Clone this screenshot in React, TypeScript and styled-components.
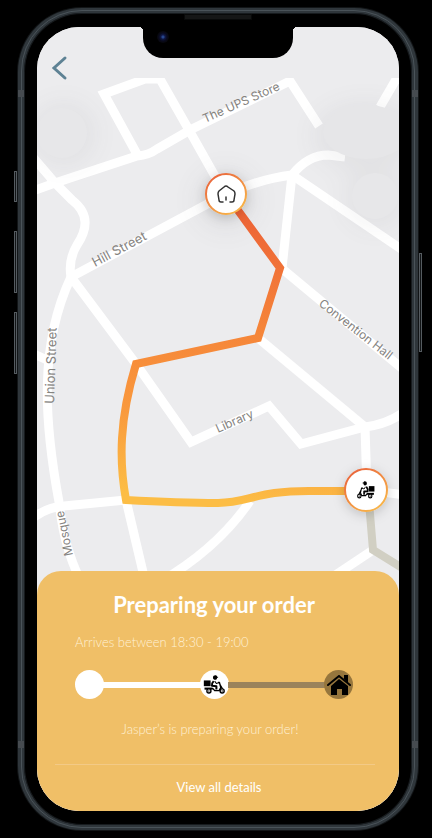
import React from "react";
import styled, { createGlobalStyle } from "styled-components";

const GlobalStyle = createGlobalStyle`
  * { box-sizing: border-box; }
  body { margin: 0; background: #000; }
`;

const Page = styled.main`
  display: flex;
  min-height: 100vh;
  padding: 8px 14px 8px 18px;
  background: #000;
  font-family: Lato, sans-serif;
`;

const Phone = styled.div`
  position: relative;
  display: flex;
  flex: 1;
  padding: 14px 13px;
  border: 5px solid #2f363b;
  border-width: 5px 6px;
  border-radius: 64px;
  background: #000;
  box-shadow: inset 0 0 0 1px #171b1e, 0 0 0 1px #121517;
  &::before {
    content: "";
    position: absolute;
    inset: -3px;
    border: 1px solid #4a5359;
    border-radius: 61px;
  }
`;

const SideKey = styled.span<{ $side: "left" | "right"; $top: number; $size: number }>`
  position: absolute;
  top: ${(p) => p.$top}px;
  ${(p) => p.$side}: -10px;
  width: 3px;
  height: ${(p) => p.$size}px;
  border: 1px solid #555b60;
  background: #111416;
`;

const Antenna = styled.span<{ $side: "left" | "right"; $edge: "top" | "bottom" }>`
  position: absolute;
  ${(p) => p.$side}: -6px;
  ${(p) => p.$edge}: 77px;
  width: 6px;
  height: 7px;
  background: #464b50;
`;

const Speaker = styled.span`
  position: absolute;
  top: 1px;
  left: 50%;
  width: 68px;
  height: 6px;
  margin-left: -34px;
  border: 1px solid #080909;
  background: #151616;
`;

const Screen = styled.div`
  position: relative;
  display: grid;
  flex: 1;
  grid-template-columns: minmax(0, 1fr);
  overflow: hidden;
  border-radius: 42px;
  background: #ececee;
`;

const Notch = styled.div`
  position: absolute;
  top: 0;
  left: 50%;
  width: 150px;
  height: 31px;
  margin-left: -75px;
  border-radius: 0 0 20px 20px;
  background: #000;
  &::before,
  &::after {
    content: "";
    position: absolute;
    top: 0;
    width: 4px;
    height: 4px;
  }
  &::before {
    left: -4px;
    background: radial-gradient(circle at 0 100%, transparent 4px, #000 4px);
  }
  &::after {
    right: -4px;
    background: radial-gradient(circle at 100% 100%, transparent 4px, #000 4px);
  }
`;

const Camera = styled.span`
  position: absolute;
  top: 4px;
  left: 14px;
  width: 12px;
  height: 12px;
  border-radius: 50%;
  background: radial-gradient(circle, #28478c 0 1px, #10194a 2px, #090a1c 4px, #07070c 6px);
`;

const BackButton = styled.button`
  position: absolute;
  top: 27px;
  left: 12px;
  width: 22px;
  height: 28px;
  padding: 0;
  border: 0;
  background: none;
  cursor: pointer;
  svg { display: block; }
`;

const MapView = styled.svg`
  grid-area: 1 / 1;
  width: 100%;
  height: 100%;
  min-height: 0;
  text { font-family: Inter, sans-serif; fill: #85837f; }
`;

const Sheet = styled.section`
  position: relative;
  grid-area: 1 / 1;
  align-self: end;
  height: 240px;
  border-radius: 24px 24px 0 0;
  background: rgba(239, 189, 98, 0.97);
  color: #fff;
`;

const SheetBody = styled.div`
  padding: 20px 46px 0 38px;
`;

const Title = styled.h1`
  margin: 0;
  font-size: 22px;
  line-height: 28px;
  font-weight: 700;
  text-align: center;
  white-space: nowrap;
`;

const Arrival = styled.p`
  margin: 14px 0 19px;
  font-size: 13px;
  line-height: 18px;
  font-weight: 300;
  color: #fff1d6;
`;

const Status = styled(Arrival)`
  margin: 21px 8px 26px 0;
  text-align: center;
`;

const Track = styled.ol`
  display: flex;
  align-items: center;
  margin: 0;
  padding: 0;
  list-style: none;
`;

const Step = styled.li<{ $done?: boolean }>`
  display: grid;
  flex: none;
  place-items: center;
  width: 29px;
  height: 29px;
  border-radius: 50%;
  background: ${(p) => (p.$done ? "#fff" : "#96763d")};
`;

const Leg = styled.li<{ $done?: boolean }>`
  flex: 1;
  height: 6px;
  margin: 0 -1px;
  background: ${(p) => (p.$done ? "#fff" : "#9b835b")};
`;

const Footer = styled.footer`
  display: flex;
  justify-content: center;
  margin: 0 24px 0 18px;
  padding: 12px 0 0 8px;
  border-top: 1px solid #f3ca87;
`;

const DetailsButton = styled.button`
  padding: 0;
  border: 0;
  background: none;
  color: #fff;
  font: 400 13px/20px Lato, sans-serif;
  cursor: pointer;
`;

const Rider = () => (
  <g fill="none" stroke="#000" strokeLinejoin="round">
    <path d="M2 16h20v17H2z" fill="#000" stroke="none" />
    <path d="M29 8c0-5 3-7 7-7 3 0 5 2 5 4h3v3h-3c0 4-2 6-5 6-4 0-7-2-7-6z" fill="#000" stroke="none" />
    <path d="M31 18c-4 4-6 9-5 14l13 1v10" strokeWidth="6" />
    <path d="M34 18l5 7 8-3" strokeWidth="3" />
    <path d="M6 40h23l5 6h13l5-9-4-15h-4M50 29l7 12" strokeWidth="4" />
    <path d="M4 37h24v6H4z" fill="#000" stroke="none" />
    <circle cx="17" cy="47" r="6" fill="#fff" strokeWidth="4" />
    <circle cx="56" cy="47" r="6" fill="#fff" strokeWidth="4" />
    <circle cx="17" cy="47" r="2" fill="#000" stroke="none" />
    <circle cx="56" cy="47" r="2" fill="#000" stroke="none" />
  </g>
);

const streets: [string, string][] = [
  ["block", "M138 156 104 94 145 79 H160 L189 130 220 185"],
  ["store", "M30 192 55 183 137 156 Q149 155 157 149 L190 130 290 81 319 126"],
  ["curve", "M32 156 55 183 72 200 C90 214 87 230 77 245 Q68 260 71 277"],
  ["hill", "M71 277 226 194 Q260 179 292 175"],
  ["bend", "M292 175 Q308 155 328 155 L345 157"],
  ["north", "M380 107 398 76"],
  ["link", "M292 175 282 268"],
  ["east", "M292 175 404 251"],
  ["hall", "M280 267 404 370"],
  ["south", "M258 338 365 427"],
  ["library", "M71 277 136 364 191 442 269 406 301 444 365 427 Q388 424 404 412"],
  ["stem", "M365 427 367 490 404 495"],
  ["union", "M71 277 C39 345 44 420 59 502 C63 537 70 563 90 600"],
  ["west", "M34 517 Q48 507 64 506 L126 500"],
  ["down", "M126 500 146 585"],
  ["slope", "M250 501 Q218 548 160 582"],
  ["corner", "M373 550 295 602"],
  ["stub", "M34 354 47 360"],
];

const CityMap = () => (
  <MapView viewBox="37 27 362 784" preserveAspectRatio="xMidYMin slice" role="img" aria-label="Delivery route">
    <defs>
      <linearGradient id="route" gradientUnits="userSpaceOnUse" x1="240" y1="205" x2="210" y2="500">
        <stop offset="0" stopColor="#ec6136" />
        <stop offset="0.4" stopColor="#f58439" />
        <stop offset="0.72" stopColor="#f9983c" />
        <stop offset="1" stopColor="#fcbd45" />
      </linearGradient>
      <linearGradient id="ring" x1="0" y1="0" x2="0.7" y2="1">
        <stop offset="0" stopColor="#e85d3b" />
        <stop offset="1" stopColor="#f8b448" />
      </linearGradient>
      <clipPath id="area"><path d="M37 78h362v733H37z" /></clipPath>
      <filter id="soft" x="-50%" y="-50%" width="200%" height="200%">
        <feGaussianBlur stdDeviation="14" />
      </filter>
      <filter id="lift" x="-50%" y="-50%" width="200%" height="200%">
        <feDropShadow dx="0" dy="3" stdDeviation="6" floodOpacity="0.18" />
      </filter>
    </defs>
    <path d="M37 27h362v784H37z" fill="#ececee" />
    <g clipPath="url(#area)">
      <g fill="none" stroke="#fff" strokeWidth="9">
        {streets.map(([name, d]) => <path key={name} d={d} />)}
      </g>
      <g fill="#55555c" opacity="0.07" filter="url(#soft)">
        <circle cx="64" cy="134" r="30" />
        <ellipse cx="365" cy="136" rx="50" ry="32" />
        <circle cx="375" cy="199" r="28" />
        <circle cx="226" cy="200" r="30" />
      </g>
      <circle cx="62" cy="133" r="25" fill="#e7e7e9" />
      <circle cx="375" cy="196" r="23" fill="#e7e7e9" />
      <ellipse cx="366" cy="132" rx="43" ry="27" fill="#e6e6e8" />
    </g>
    <path d="M368 490 373 550 404 569" fill="none" stroke="#d1cfc3" strokeWidth="8" />
    <path
      d="M226 194 280 268 258 338 136 364 C119 420 119 461 126 500 Q180 503 218 503 C250 503 255 490 315 491 H366"
      fill="none"
      stroke="url(#route)"
      strokeWidth="8"
    />
    <g fontSize="12">
      <text transform="translate(205 123) rotate(-24)">The UPS Store</text>
      <text transform="translate(95 267) rotate(-28)" fontSize="13">Hill Street</text>
      <text transform="translate(318 305) rotate(38)">Convention Hall</text>
      <text transform="translate(54 404) rotate(-88)" fontSize="13">Union Street</text>
      <text transform="translate(218 433) rotate(-24)">Library</text>
      <text transform="translate(73 555) rotate(-102)">Mosque</text>
    </g>
    <g filter="url(#lift)">
      <circle cx="226" cy="194" r="20" fill="#fff" stroke="url(#ring)" strokeWidth="2" />
      <circle cx="366" cy="490" r="21" fill="#fff" stroke="url(#ring)" strokeWidth="2" />
    </g>
    <path
      d="M223 202h-2q-2 0-2-2l-1-6q0-2 1-3l5-4q2-2 4 0l6 4q1 1 1 3l-1 6q0 2-2 2h-2M226 197v3"
      fill="none"
      stroke="#333"
      strokeWidth="1.5"
      strokeLinecap="round"
    />
    <g transform="translate(375 481) scale(-0.28 0.32)"><Rider /></g>
  </MapView>
);

export default function App() {
  return (
    <>
      <GlobalStyle />
      <Page>
        <Phone>
          <SideKey $side="left" $top={158} $size={31} />
          <SideKey $side="left" $top={218} $size={62} />
          <SideKey $side="left" $top={299} $size={62} />
          <SideKey $side="right" $top={240} $size={99} />
          <Antenna $side="left" $edge="top" />
          <Antenna $side="right" $edge="top" />
          <Antenna $side="left" $edge="bottom" />
          <Antenna $side="right" $edge="bottom" />
          <Speaker />
          <Screen>
            <CityMap />
            <Notch><Camera /></Notch>
            <BackButton aria-label="Back">
              <svg width="22" height="28" viewBox="0 0 22 28" fill="none" stroke="#5e8294" strokeWidth="3" strokeLinecap="round">
                <path d="M16 4 5 14 16 24" />
              </svg>
            </BackButton>
            <Sheet>
              <SheetBody>
                <Title>Preparing your order</Title>
                <Arrival>Arrives between 18:30 - 19:00</Arrival>
                <Track aria-label="Order progress">
                  <Step $done />
                  <Leg $done aria-hidden="true" />
                  <Step $done>
                    <svg width="22" height="19" viewBox="0 0 64 56"><Rider /></svg>
                  </Step>
                  <Leg aria-hidden="true" />
                  <Step>
                    <svg width="24" height="20" viewBox="0 0 24 20">
                      <path d="M1 10 12 1 23 10" fill="none" stroke="#000" strokeWidth="2" strokeLinecap="round" />
                      <path d="M17 0h4v8l-4-4zM12 4l9 7v9h-6v-6H10v6H4v-9z" fill="#000" />
                    </svg>
                  </Step>
                </Track>
                <Status>Jasper’s is preparing your order!</Status>
              </SheetBody>
              <Footer><DetailsButton>View all details</DetailsButton></Footer>
            </Sheet>
          </Screen>
        </Phone>
      </Page>
    </>
  );
}
